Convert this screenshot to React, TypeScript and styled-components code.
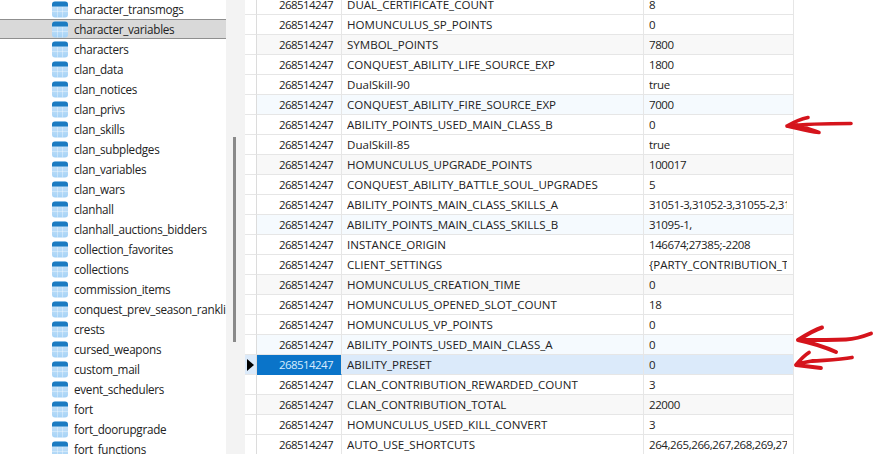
import React from 'react'
import styled, { createGlobalStyle } from 'styled-components'

const GlobalStyle = createGlobalStyle`
  html, body {
    margin: 0;
    padding: 0;
    background: #fff;
  }
  body {
    font-family: "Open Sans", "Noto Sans", "Liberation Sans", sans-serif;
    font-size: 12px;
    color: #222;
  }
`

const Page = styled.div`
  position: relative;
  display: flex;
  width: 887px;
  height: 454px;
  overflow: hidden;
  background: #fff;
`

const Sidebar = styled.ul`
  flex: none;
  width: 226px;
  margin: -1px 0 0;
  padding: 0;
  list-style: none;
`

const TreeRow = styled.li<{ selected?: boolean }>`
  display: flex;
  align-items: center;
  box-sizing: border-box;
  height: 20px;
  padding-left: 52px;
  white-space: nowrap;
  overflow: hidden;
  background: ${props => (props.selected ? '#d9d9d9' : 'transparent')};
  box-shadow: ${props => (props.selected ? 'inset 0 1px 0 #8f8f8f, inset 0 -1px 0 #8f8f8f' : 'none')};
`

const TreeLabel = styled.span`
  margin-left: 6px;
  font-size: 11.7px;
  letter-spacing: -0.27px;
`

const ScrollTrack = styled.div`
  flex: none;
  box-sizing: border-box;
  width: 19px;
  height: 100%;
  padding: 137px 0 0 7px;
  background: #f3f3f3;
`

const ScrollThumb = styled.div`
  width: 3px;
  height: 205px;
  background: #8a8a8a;
`

const Grid = styled.div`
  flex: none;
  width: 550px;
  margin-top: -5px;
`

const GridRow = styled.div`
  display: grid;
  grid-template-columns: 12px 85px 302px 150px;
  height: 20px;
`

const rowColors: Record<string, string> = {
  plain: '#fff',
  grey: '#f8f8f8',
  blue: '#f5fafe',
  active: '#dbeafa',
}

const Indicator = styled.div<{ active?: boolean }>`
  display: flex;
  align-items: center;
  justify-content: center;
  box-sizing: border-box;
  border-bottom: 1px solid #e6e6e6;
  border-right: 1px solid #dcdcdc;
  background: ${props => (props.active ? '#dbeafa' : '#fff')};
`

const Triangle = styled.div`
  width: 0;
  height: 0;
  border-top: 6px solid transparent;
  border-bottom: 6px solid transparent;
  border-left: 7px solid #000;
`

const IdCell = styled.div<{ tone: string }>`
  box-sizing: border-box;
  padding-right: 8px;
  line-height: 19px;
  font-size: 11.5px;
  letter-spacing: -0.58px;
  text-align: right;
  border-bottom: 1px solid ${props => (props.tone === 'active' ? '#0a74c9' : '#e6e6e6')};
  border-right: 1px solid #e6e6e6;
  background: ${props => (props.tone === 'active' ? '#0a74c9' : rowColors[props.tone])};
  color: ${props => (props.tone === 'active' ? '#d6ecff' : '#222')};
`

const TextCell = styled.div<{ tone: string }>`
  box-sizing: border-box;
  min-width: 0;
  padding-left: 5px;
  line-height: 19px;
  white-space: nowrap;
  border-bottom: 1px solid #e6e6e6;
  border-right: 1px solid #e6e6e6;
  background: ${props => rowColors[props.tone]};
`

const NameText = styled.div`
  height: 19px;
  overflow: hidden;
  font-size: 11.55px;
`

const ValueText = styled.div<{ numeric: boolean }>`
  height: 19px;
  margin-right: 6px;
  overflow: hidden;
  font-size: 11.5px;
  letter-spacing: ${props => (props.numeric ? '-0.4px' : '0')};
`

const ArrowLayer = styled.svg`
  position: absolute;
  left: 0;
  top: 0;
  pointer-events: none;
`

const tables = [
  'character_transmogs',
  'character_variables',
  'characters',
  'clan_data',
  'clan_notices',
  'clan_privs',
  'clan_skills',
  'clan_subpledges',
  'clan_variables',
  'clan_wars',
  'clanhall',
  'clanhall_auctions_bidders',
  'collection_favorites',
  'collections',
  'commission_items',
  'conquest_prev_season_rankli',
  'crests',
  'cursed_weapons',
  'custom_mail',
  'event_schedulers',
  'fort',
  'fort_doorupgrade',
  'fort_functions',
]

const rows: [string, string, string][] = [
  ['DUAL_CERTIFICATE_COUNT', '8', 'plain'],
  ['HOMUNCULUS_SP_POINTS', '0', 'plain'],
  ['SYMBOL_POINTS', '7800', 'grey'],
  ['CONQUEST_ABILITY_LIFE_SOURCE_EXP', '1800', 'plain'],
  ['DualSkill-90', 'true', 'plain'],
  ['CONQUEST_ABILITY_FIRE_SOURCE_EXP', '7000', 'blue'],
  ['ABILITY_POINTS_USED_MAIN_CLASS_B', '0', 'plain'],
  ['DualSkill-85', 'true', 'plain'],
  ['HOMUNCULUS_UPGRADE_POINTS', '100017', 'grey'],
  ['CONQUEST_ABILITY_BATTLE_SOUL_UPGRADES', '5', 'plain'],
  ['ABILITY_POINTS_MAIN_CLASS_SKILLS_A', '31051-3,31052-3,31055-2,31056-2', 'plain'],
  ['ABILITY_POINTS_MAIN_CLASS_SKILLS_B', '31095-1,', 'blue'],
  ['INSTANCE_ORIGIN', '146674;27385;-2208', 'plain'],
  ['CLIENT_SETTINGS', '{PARTY_CONTRIBUTION_TYPE', 'plain'],
  ['HOMUNCULUS_CREATION_TIME', '0', 'grey'],
  ['HOMUNCULUS_OPENED_SLOT_COUNT', '18', 'plain'],
  ['HOMUNCULUS_VP_POINTS', '0', 'plain'],
  ['ABILITY_POINTS_USED_MAIN_CLASS_A', '0', 'blue'],
  ['ABILITY_PRESET', '0', 'active'],
  ['CLAN_CONTRIBUTION_REWARDED_COUNT', '3', 'plain'],
  ['CLAN_CONTRIBUTION_TOTAL', '22000', 'grey'],
  ['HOMUNCULUS_USED_KILL_CONVERT', '3', 'plain'],
  ['AUTO_USE_SHORTCUTS', '264,265,266,267,268,269,270,271', 'plain'],
]

function TableIcon() {
  return (
    <svg width="16" height="17" viewBox="0 0 16 17" style={{ flex: 'none' }}>
      <defs>
        <linearGradient id="tableBody" x1="0" y1="0" x2="0" y2="1">
          <stop offset="0" stopColor="#d3e9fb" />
          <stop offset="1" stopColor="#a5d2f6" />
        </linearGradient>
      </defs>
      <rect x="0" y="0.5" width="16" height="16" rx="3" fill="url(#tableBody)" />
      <path d="M0 5.5V3.5a3 3 0 0 1 3-3h10a3 3 0 0 1 3 3v2z" fill="#1c7cc2" />
      <path d="M0 10.5h16M5.5 6v10.5M10.5 6v10.5" stroke="#fff" strokeOpacity="0.35" fill="none" />
    </svg>
  )
}

function App() {
  return (
    <Page>
      <GlobalStyle />
      <Sidebar>
        {tables.map(name => (
          <TreeRow key={name} selected={name === 'character_variables'}>
            <TableIcon />
            <TreeLabel>{name}</TreeLabel>
          </TreeRow>
        ))}
      </Sidebar>
      <ScrollTrack>
        <ScrollThumb />
      </ScrollTrack>
      <Grid>
        {rows.map(([name, value, tone]) => (
          <GridRow key={name}>
            <Indicator active={tone === 'active'}>{tone === 'active' && <Triangle />}</Indicator>
            <IdCell tone={tone}>268514247</IdCell>
            <TextCell tone={tone}>
              <NameText>{name}</NameText>
            </TextCell>
            <TextCell tone={tone}>
              <ValueText numeric={!/[A-Z]/.test(value)}>{value}</ValueText>
            </TextCell>
          </GridRow>
        ))}
      </Grid>
      <ArrowLayer width="887" height="454" viewBox="0 0 887 454" fill="none" stroke="#d5141c" strokeLinecap="round" strokeLinejoin="round">
        <path d="M851 123.5 C830 123.5 805 124 787 126 M787 126 C794 122 801 119 808 117.5 M787 126 C797 128 806 131 819 132.5 C812 130 803 127 797 125" strokeWidth="3.6" />
        <path d="M871 333.5 C862 337 856 339 846 339.5 C830 340 812 340 798 340 M798 340 C806 335 814 330 822 327.5 M798 340 C812 343 825 347 836 352" strokeWidth="4" />
        <path d="M852 357.5 C840 360 825 360 812 361 C806 362 800 363 796 365 M796 365 C800 360 805 355 809 352.5 M796 365 C804 366 813 367 821 368" strokeWidth="3.8" />
      </ArrowLayer>
    </Page>
  )
}

export default App
